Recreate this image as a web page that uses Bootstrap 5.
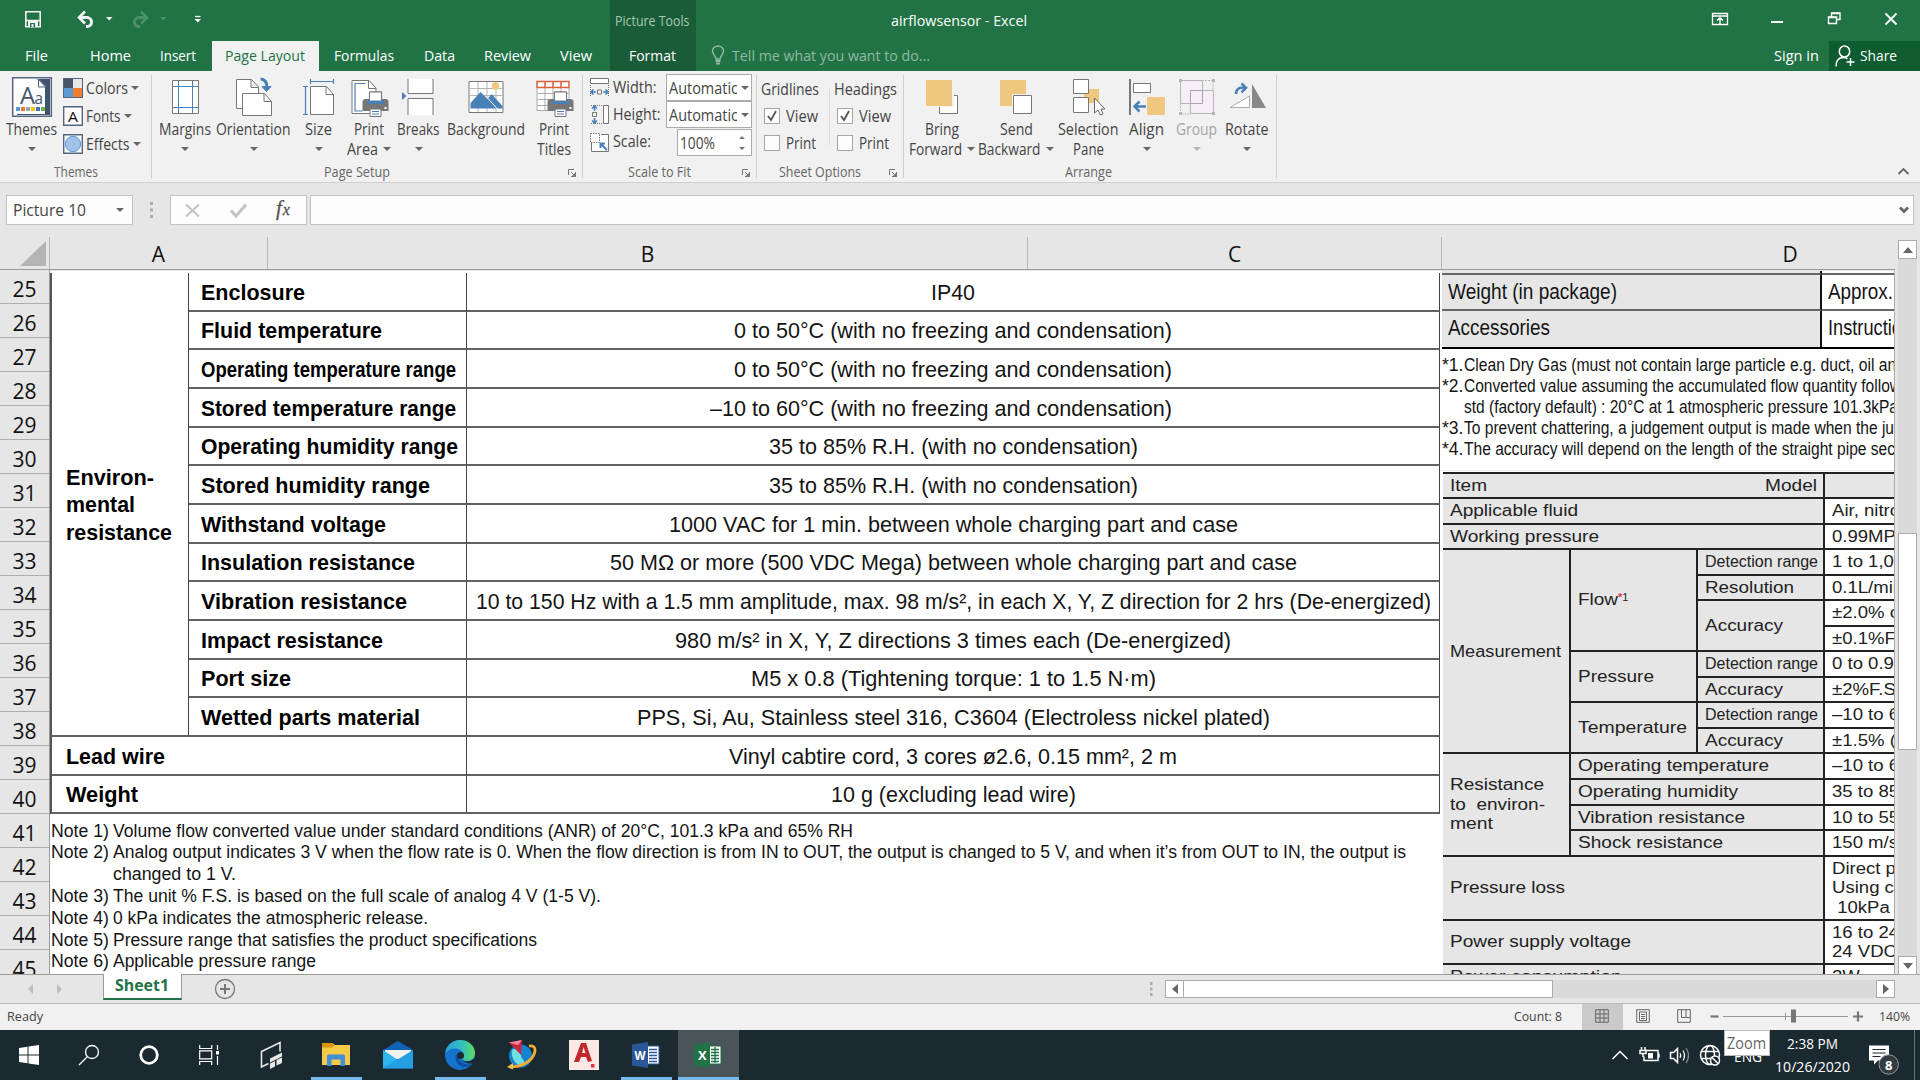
<!DOCTYPE html>
<html lang="en">
<head>
<meta charset="utf-8">
<title>airflowsensor - Excel</title>
<link href="https://cdn.jsdelivr.net/npm/bootstrap@5.3.0/dist/css/bootstrap.min.css" rel="stylesheet">
<style>
body{width:1920px;height:1080px;overflow:hidden;font-family:"Open Sans","Noto Sans",sans-serif;font-size:15.5px;line-height:20px;color:#444;background:#e6e6e6}
svg{display:block;flex:none}
[data-w],[data-s]{display:inline-block;white-space:pre;transform-origin:0 50%}
.xl-head{height:71px;background:#217346;color:#fff;position:relative}
.xl-titlebar{height:41px;display:grid;grid-template-columns:610px 86px 1000px 224px}
.xl-ctx{background:#1a5c38;color:#a6c7b4;font-size:14px;padding:11px 0 0 5px}
.xl-title{padding:10px 0 0 195px;font-size:15px}
.xl-tabs{height:30px;display:grid;grid-template-columns:73px 75px 60px 4px 107px 90px 60px 77px 60px 4px 86px 15px 21px 1034px 63px 91px}
.xl-tabs>div{display:flex;justify-content:center;padding-top:4px;font-size:15px}
.xl-tabs .on{background:#f1f1f1;color:#217346;padding-right:1px}
.xl-tabs .fmt{background:#1a5c38;padding-right:2px}
.xl-tabs .tell{justify-content:flex-start;color:#90b9a2}
.xl-tabs .signin{padding-right:3px}
.xl-tabs .share{background:#0e5c2f;justify-content:flex-start;padding-left:6px}
.xl-ribbon{height:112px;background:#f1f1f1;border-bottom:1px solid #d2d0ce;display:grid;grid-template-columns:152px 431px 174px 147px 373px 1fr}
.rgroup{position:relative;display:flex;flex-direction:column}
.rgroup::after{content:"";position:absolute;right:0;top:4px;height:103px;width:1px;background:#cfcfcf}
.rgroup:last-child::after{display:none}
.rbody{height:92px;display:grid}
.rname{font-size:14px;color:#666;line-height:18px;height:18px;text-align:center}
.rbtn{display:flex;flex-direction:column;align-items:center;padding-top:5px}
.rbtn>svg:first-child{height:43px}
.rbtn .ln{height:20px;display:flex;align-items:center;gap:5px}
.caret{width:0;height:0;border:4px solid transparent;border-top-color:#666;border-bottom:0;flex:none}
.caret.alone{margin-top:8px}
.dim{color:#a5a5a5}.dim .caret{border-top-color:#b5b5b5}
.launch{position:absolute;right:7px;bottom:5px}
.smalls{padding-top:7px}
.smalls>div{height:28px;display:flex;align-items:flex-start;gap:3px}
.combo{background:#fff;border:1px solid #ababab;height:27px;width:86px;display:flex;align-items:center;padding-left:2px;overflow:hidden;position:relative;margin-left:auto}
.combo .clipw{width:68px;overflow:hidden;height:20px}
.fitgrid{grid-template-rows:27px 28px 27px;padding:3px 5px 0 7px}
.chk{width:16px;height:16px;border:1px solid #a5a5a5;background:#fdfdfd}
.optcol+.optcol{position:relative}
.optcol+.optcol::before{content:"";position:absolute;left:-5px;top:18px;height:56px;width:1px;background:#dcdcdc}
.optcol .chkline{display:flex;align-items:center;gap:6px;padding-left:3px;height:27px;margin-top:-1px;margin-bottom:1px}
.fbar{height:54px;padding:12px 6px 0;display:flex}
.fbox{height:30px;background:#fdfdfd;border:1px solid #c2c2c2;display:flex;align-items:center}
.colhead{height:33px;width:1895px;border-bottom:1px solid #9b9b9b;display:grid;grid-template-columns:50px 218px 760px 414px 453px;color:#111;font-size:21px;line-height:28px;text-align:center}
.colhead>div{border-right:1px solid #b5b5b5;padding-top:3px}
.colhead>div:last-child{padding-left:244px;border-color:transparent}
.gridrow{height:703px;display:flex;margin-top:1px}
.rowheads{width:50px;overflow:hidden;border-right:1px solid #9b9b9b;color:#111;font-size:21px;flex:none;margin-top:-1px}
.rowheads div{height:34px;line-height:32px;text-align:center;border-bottom:1px solid #adadad;padding-top:3px}
.cells{width:1845px;height:703px;background:#fff;overflow:hidden;display:flex;font-family:"Liberation Sans",Arial,sans-serif;color:#141414;border-right:1px solid #aaa}
.pic1{width:1391px;flex:none;font-size:22px;padding-top:2px}
.spec{display:grid;grid-template-columns:137px 278px 972.5px;grid-template-rows:repeat(14,38.67px);border-left:2px solid #555;width:1389.5px}
.spec>div{border-right:1.5px solid #444;border-bottom:2px solid #626262;display:flex;align-items:center;padding-top:3px}
.spec .k{font-weight:700;padding-left:12px;color:#000;white-space:nowrap}
.spec .v{justify-content:center;padding-top:3px;padding-left:1px}
.spec .env{grid-row:span 12;flex-direction:column;align-items:flex-start;justify-content:center;line-height:27.4px;padding:2px 0 0 14px}
.spec .wide{grid-column:span 2;padding-left:14px}
.notes{font-size:17.5px;line-height:21.8px;padding-top:6.5px;height:158px;overflow:hidden}
.notes>div{display:grid;grid-template-columns:62.5px 1fr;height:21.8px;margin-left:.5px}
.pic2{width:454px;flex:none;overflow:hidden}
.pk{display:grid;grid-template-columns:380px 140px;grid-template-rows:4px 36px 36px;font-size:22px;border-bottom:2px solid #000;margin-left:1px}
.pk>div{border-bottom:2px solid #666;border-right:2px solid #111;padding-left:6px;background:#e6e6e6;display:flex;align-items:center}
.pk>div:nth-child(2n){background:#fff}
.pk>div:nth-last-child(-n+2){border-bottom:0;padding-bottom:3px}
.pn{font-size:17.5px;line-height:21.1px;padding:6px 0 0 1px;height:121px}
.pn>div{display:grid;grid-template-columns:22px 1fr;height:21.1px}
.ptab{margin:1px 0 0 2px;border-top:2px solid #222;display:grid;grid-template-columns:128px 127px 127px 140px;grid-template-rows:25px repeat(14,25.56px) 64.6px 43.7px 26px;font-size:16px;line-height:19.5px;color:#222}
.ptab>div{background:#e6e6e6;border-right:2px solid #222;border-bottom:2px solid #222;padding-left:7px;display:flex;align-items:center;white-space:nowrap}
.ptab>.d{background:#fff;border-right:0;grid-column:4;flex-wrap:wrap;align-content:center}
.ptab>.d.hd{background:#e6e6e6}
.ptab>.d>span{display:block}
.supn{font-size:11px;margin-top:-5px}
.c3{grid-column:span 3}.c2{grid-column:span 2}.r2{grid-row:span 2}.r4{grid-row:span 4}.r8{grid-row:span 8}
.vscroll{width:19px;margin:-31px 0 0 3px;height:735px;background:#dadada;flex:none;display:flex;flex-direction:column}
.sbtn{background:#fff;border:1px solid #ababab;width:19px;height:19px;display:grid;place-items:center;flex:none}
.vthumb{background:#fff;border:1px solid #ababab;height:217px;margin:274px 0 auto}
.sheets{height:30px;border-bottom:1px solid #bdbdbd;border-top:1px solid #9b9b9b;display:flex}
.shtab{width:79px;height:26px;margin:-1px 0 0 40px;background:#fff;border:1px solid #9b9b9b;border-top:0;border-bottom:2px solid #217346;color:#217346;font-weight:700;display:flex;justify-content:center;padding:1px 1px 0 0}
.hscroll{width:730px;height:18px;margin:5px 25px 0 11px;background:#dadada;display:flex}
.hscroll .sbtn{height:18px}
.hthumb{width:369px;background:#fff;border:1px solid #ababab;border-left:0;margin-right:auto}
.xl-status{height:26px;background:#f1f1f1;display:flex;font-size:13.5px;line-height:25px}
.viewb{width:41px;display:grid;place-items:center;padding:0 2px 2px 0}
.taskbar{height:50px;background:#1b2a30;display:grid;grid-template-columns:60px 60px 60px 60px 66px 62px 62px 62px 62px 62px 62px 61px 866px 157px 58px 100px;color:#fff;position:relative}
.taskbar>.ti{display:grid;place-items:center;position:relative;padding-right:2px}
.run::after{content:"";position:absolute;left:5px;right:6px;bottom:0;height:3px;background:#76b9ed}
.run.act{background:#4a555a}.run.act::after{left:0;right:0}
.clock{font-size:15px;text-align:center;line-height:23px;padding-top:2px;margin-left:5px;width:90px}
.tip{position:absolute;left:1724px;top:1030px;width:46px;height:26px;background:#fff;border:1px solid #bbb;color:#666;font-size:17px;line-height:24px;padding-left:2px;z-index:3}
</style>
<script src="https://cdn.jsdelivr.net/npm/bootstrap@5.3.0/dist/js/bootstrap.bundle.min.js"></script>
</head>
<body>
<svg width="0" height="0" class="position-absolute"><defs>
<g id="printer"><path d="M7 12V0h12v12" fill="#fff" stroke="#777" stroke-width="1.2"/><path d="M0 10q0-3 3-3h20q3 0 3 3v9H0z" fill="#777"/><path d="M5 7h16v5H5z" fill="#4a80b8"/><path d="M7 9V0h12v9z" fill="#fff" stroke="#777"/><path d="M5 9h16v3H5z" fill="#4a80b8"/><path d="M7.500 17h11v7.500h-11z" fill="#fff" stroke="#777"/><path d="M9.500 19.500h7M9.500 22h7" stroke="#4a80b8"/><path d="M22 15h2v2h-2z" fill="#fff"/></g>
<g id="lnch" fill="none" stroke="#777"><path d="M.5 6V.5H6M3 3l3.500 3.500M7.500 3v4.500H3"/><path d="M7.500 4v3.500H4z" fill="#777"/></g>
</defs></svg>

<header class="xl-head">
 <div class="xl-titlebar">
  <svg width="610" height="41" fill="none">
   <path d="M25.800 11.800h14.400v15H25.800z" stroke="#f3f3f3" stroke-width="1.600"/><path d="M26 20.500h14" stroke="#f3f3f3" stroke-width="1.500"/><path d="M28 21h10v6H28z" fill="#f3f3f3"/><path d="M30 23h5v4h-5z" fill="#217346"/><path d="M31.500 24h2v3h-2z" fill="#f3f3f3"/>
   <path d="M79 17.500h9a5.500 4.800 0 0 1 0 9h-2" stroke="#f3f3f3" stroke-width="2.800"/><path d="M85 11.500l-6 6 6 6" stroke="#f3f3f3" stroke-width="2.600"/><path d="M106 17h6.500l-3.200 3.500z" fill="#f3f3f3"/>
   <g stroke="#4d8f6b"><path d="M147 17.500h-9a5.500 4.800 0 0 0 0 9h2" stroke-width="2.800"/><path d="M141 11.500l6 6-6 6" stroke-width="2.600"/></g><path d="M160 17h6.500l-3.200 3.500z" fill="#4d8f6b"/>
   <path d="M195 16.500h5.500" stroke="#fff" stroke-width="1.300"/><path d="M194.500 19h6.500l-3.200 3.500z" fill="#fff"/>
  </svg>
  <div class="xl-ctx"><span data-w="74.500">Picture Tools</span></div>
  <div class="xl-title"><span data-w="136">airflowsensor - Excel</span></div>
  <svg width="224" height="41" viewBox="1696 0 224 41" fill="none" stroke="#fff"><path d="M1712.500 13.500h15v11h-15zM1712.500 16h15M1720 24v-6M1717 20.500l3-2.800 3 2.800" stroke-width="1.300"/><path d="M1771 22h12" stroke-width="2"/><path d="M1828.500 17h8v6.500h-8z M1831.500 17v-4h8.500v6.500h-3.500" stroke-width="1.400"/><path d="M1828 17.500h9M1831 13.500h9" stroke-width="1.500"/><path d="M1885.500 13.500l11 11M1896.500 13.500l-11 11" stroke-width="1.800"/></svg>
 </div>
 <div class="xl-tabs">
  <div><span data-w="23">File</span></div><div><span data-w="41">Home</span></div><div><span data-w="36">Insert</span></div><div></div>
  <div class="on"><span data-w="80">Page Layout</span></div><div><span data-w="60">Formulas</span></div><div><span data-w="31">Data</span></div><div><span data-w="47">Review</span></div><div><span data-w="32">View</span></div><div></div>
  <div class="fmt"><span data-w="47">Format</span></div><div></div>
  <div class="justify-content-start"><svg width="16" height="22" viewBox="0 0 16 22" fill="none" stroke="#90b9a2" stroke-width="1.500"><path d="M5 14c0-3-3.500-4-3.500-8a5.500 5 0 0 1 11 0c0 4-3.500 5-3.500 8z"/><path d="M4.500 16h5M5 18.500h4" stroke-width="2"/></svg></div>
  <div class="tell"><span data-w="198">Tell me what you want to do...</span></div>
  <div class="signin"><span data-w="45">Sign in</span></div>
  <div class="share gap-1"><svg width="21" height="22" viewBox="0 0 21 22" fill="none" stroke="#fff" stroke-width="1.500"><ellipse cx="9.500" cy="6.500" rx="5.200" ry="5.500"/><path d="M1 21.500c0-6 3-9 7.500-9 2 0 3 .5 4 1.500M15.500 13v8M11.500 17h8"/></svg><span data-w="37">Share</span></div>
 </div>
</header>

<section class="xl-ribbon">
 <div class="rgroup"><div class="rbody" style="grid-template-columns:63px 89px">
  <div class="rbtn"><svg width="42" viewBox="11 76 42 43"><path d="M12.700 77.700h38.600v38.600H12.700z" fill="#fff" stroke="#56657f" stroke-width="1.500"/><path d="M36 79h14v36H17l0-1h28V86z" fill="#3f5270"/><path d="M39 79l7 8h-7z" fill="#fff" stroke="#56657f"/><path d="M15 79.500h24v7.500h6v27H15z" fill="#fff"/><path d="M38.500 79.500v7.500h7z" fill="#fff" stroke="#56657f"/><g fill="#44546a"><text x="20" y="103.500" font-size="23" textLength="15" lengthAdjust="spacingAndGlyphs">A</text><text x="34.500" y="103.500" font-size="16" textLength="8.500" lengthAdjust="spacingAndGlyphs">a</text></g><path d="M16 107h4v4h-4z" fill="#5b9bd5"/><path d="M21 107h4v4h-4z" fill="#ed7d31"/><path d="M26 107h4v4h-4z" fill="#a5a5a5"/><path d="M31 107h4v4h-4z" fill="#ffc000"/><path d="M36 107h4v4h-4z" fill="#4472c4"/><path d="M41 107h4v4h-4z" fill="#70ad47"/></svg><div class="ln"><span data-w="51">Themes</span></div><i class="caret alone"></i></div>
  <div class="smalls">
   <div><svg width="20" height="20"><path d="M0 0h20v20H0z" fill="#56657f"/><path d="M1 1h9v9H1z" fill="#44546a"/><path d="M10 1h9v9h-9z" fill="#e7e6e6"/><path d="M1 10h9v9H1z" fill="#5b9bd5"/><path d="M10 10h9v9h-9z" fill="#ed7d31"/></svg><span data-w="42">Colors</span><i class="caret mt-2"></i></div>
   <div><svg width="20" height="20"><path d="M.7.700h18.600v18.600H.7z" fill="#fff" stroke="#56657f" stroke-width="1.400"/><text x="5" y="15.500" font-size="15" fill="#111" textLength="10" lengthAdjust="spacingAndGlyphs">A</text></svg><span data-w="34.500">Fonts</span><i class="caret mt-2"></i></div>
   <div><svg width="20" height="20"><path d="M.7.700h18.600v18.600H.7z" fill="#fff" stroke="#56657f" stroke-width="1.400"/><circle cx="10" cy="10" r="7.700" fill="#a3c2e8" stroke="#5b9bd5"/></svg><span data-w="43.500">Effects</span><i class="caret mt-2"></i></div>
  </div></div>
  <div class="rname"><span data-w="44">Themes</span></div></div>

 <div class="rgroup"><div class="rbody" style="grid-template-columns:65px 73px 57px 44px 55px 79px 57px">
  <div class="rbtn"><svg width="28" viewBox="171 76 28 43"><path d="M172.500 80.500h26v33h-26z" fill="#fff" stroke="#777"/><path d="M178.500 81v32M192.500 81v32M173 86.500h25M173 107.500h25" stroke="#4a80b8"/></svg><div class="ln"><span data-w="52">Margins</span></div><i class="caret alone"></i></div>
  <div class="rbtn"><svg width="40" viewBox="234 76 40 43" fill="#fff" stroke="#777"><path d="M236.500 108.500v-29h15l7 7.500v22zM251 79.500v8h7"/><path d="M242.500 115.500v-22h22l7 8v14z"/><path d="M264 93.500v8h7.500" fill="none"/><path d="M260.500 79c5 0 6.500 4 6.500 9" fill="none" stroke="#4a80b8" stroke-width="3"/><path d="M262 86.500h9l-4.500 5z" fill="#4a80b8" stroke="#4a80b8"/></svg><div class="ln"><span data-w="74.500">Orientation</span></div><i class="caret alone"></i></div>
  <div class="rbtn"><svg width="34" viewBox="302 76 34 43" fill="none"><path d="M310.500 114.500v-28h16l7 8v20z" fill="#fff" stroke="#777"/><path d="M326 86.500v8h7.500" stroke="#777"/><path d="M310.500 81.500h23M310.500 79v5M333.500 79v5M305.500 86.500v28M303 86.500h5M303 114.500h5" stroke="#4a80b8" stroke-width="1.200"/></svg><div class="ln"><span data-w="27">Size</span></div><i class="caret alone"></i></div>
  <div class="rbtn"><svg width="40" viewBox="349.500 76 40 43"><path d="M352.500 113.500v-33h17l7 7.500v25.500z" fill="#fff" stroke="#777"/><path d="M369 80.500v8h7.500" fill="none" stroke="#777"/><path d="M363 111h-7.500V83.500H366" fill="none" stroke="#4a80b8" stroke-width="1.200"/><use href="#printer" x="363" y="92"/></svg><div class="ln"><span data-w="30">Print</span></div><div class="ln"><span data-w="31">Area</span><i class="caret"></i></div></div>
  <div class="rbtn"><svg width="36" viewBox="400.500 76 36 43"><path d="M407.500 79v14.500h25V79M407.500 115V98.500h25V115" fill="#fff" stroke="#777"/><path d="M401.500 92l4.500 4-4.500 4z" fill="#4a80b8"/></svg><div class="ln"><span data-w="42.500">Breaks</span></div><i class="caret alone"></i></div>
  <div class="rbtn"><svg width="36" viewBox="467.500 76 36 43"><path d="M468.500 81.500h34v31h-34z" fill="#fff" stroke="#777"/><path d="M469 88.500h33M469 95.500h33M477.500 82v30M486.500 82v30M495.500 82v30" stroke="#b5b5b5"/><circle cx="495" cy="86" r="3.800" fill="#f0c77c"/><path d="M470 108.500V103l10-11 7 7 4-5 11 12v2.500z" fill="#4a80b8"/><path d="M487 98l10 11" stroke="#fff"/></svg><div class="ln"><span data-w="78">Background</span></div></div>
  <div class="rbtn"><svg width="40" viewBox="533.500 76 40 43"><path d="M536.500 81.500h32v29h-32z" fill="#fff" stroke="#aaa"/><path d="M537 93.500h31M537 99.500h31M537 105.500h31M544.500 82v29M552.500 82v29M560.500 82v29" stroke="#aaa"/><path d="M536.500 81.500h32v6h-32zM544.500 82v5M552.500 82v5M560.500 82v5" fill="none" stroke="#e0623a" stroke-width="1.300"/><use href="#printer" x="547" y="92"/></svg><div class="ln"><span data-w="30">Print</span></div><div class="ln"><span data-w="34">Titles</span></div></div>
  </div>
  <div class="rname" style="padding-right:22px"><span data-w="66">Page Setup</span></div><svg class="launch" width="8" height="8"><use href="#lnch"/></svg></div>

 <div class="rgroup"><div class="rbody fitgrid">
  <div class="d-flex gap-1 align-items-start"><svg class="mt-1" width="19" height="19" fill="none"><path d="M.5.500h18v5H.5z" fill="#fff" stroke="#777"/><path d="M.5 7v11M18.500 7v11" stroke="#777" stroke-dasharray="1 1"/><path d="M7.500 12h4v4h-4z" stroke="#777"/><path d="M1 14h5M13 14h5M3.500 11.500L1 14l2.500 2.500M15.500 11.500L18 14l-2.500 2.500" stroke="#4a80b8" stroke-width="1.600"/></svg><span style="margin-top:3px" data-w="43.500">Width:</span><div class="combo"><div class="clipw"><span data-w="69">Automatic</span></div><i class="caret ms-1"></i></div></div>
  <div class="d-flex gap-1 align-items-start"><svg class="mt-1" width="19" height="19" fill="none"><path d="M13.500.500h5v18h-5z" fill="#fff" stroke="#777"/><path d="M1 .5h11M1 18.500h11" stroke="#777" stroke-dasharray="1 1"/><path d="M2.500 7.500h4v4h-4z" stroke="#777"/><path d="M4.500 1v5M4.500 13v5M2 3.500L4.500 1 7 3.500M2 15.500L4.500 18 7 15.500" stroke="#4a80b8" stroke-width="1.600"/></svg><span style="margin-top:3px" data-w="47.500">Height:</span><div class="combo"><div class="clipw"><span data-w="69">Automatic</span></div><i class="caret ms-1"></i></div></div>
  <div class="d-flex gap-1 align-items-start"><svg class="mt-1" width="19" height="19" fill="none"><path d="M1.500 10v8.500h17V1.500H11" fill="#fff" stroke="#777"/><path d="M.5.500h9v9h-9z" fill="#fff" stroke="#777" stroke-dasharray="1.500 1"/><path d="M10 10l7 7M10.500 15v-4.500H15" stroke="#4a80b8" stroke-width="2"/></svg><span style="margin-top:2px" data-w="38">Scale:</span><div class="combo" style="width:75px"><span data-w="35">100%</span><svg class="ms-auto me-1" width="10" height="20"><path d="M2 6h6L5 3zM2 14h6l-3 3z" fill="#777"/></svg></div></div>
  </div>
  <div class="rname" style="padding-right:21px"><span data-w="63">Scale to Fit</span></div><svg class="launch" width="8" height="8"><use href="#lnch"/></svg></div>

 <div class="rgroup"><div class="rbody" style="grid-template-columns:73px 72px;padding-left:4px">
  <div class="optcol"><div class="mt-2 pb-1"><span data-w="58">Gridlines</span></div>
   <div class="chkline"><svg class="chk" viewBox="0 0 14 14"><path d="M3 7l3 4 5-9" fill="none" stroke="#555" stroke-width="1.800"/></svg><span data-w="32">View</span></div>
   <div class="chkline"><span class="chk"></span><span data-w="30">Print</span></div></div>
  <div class="optcol"><div class="mt-2 pb-1"><span data-w="63">Headings</span></div>
   <div class="chkline"><svg class="chk" viewBox="0 0 14 14"><path d="M3 7l3 4 5-9" fill="none" stroke="#555" stroke-width="1.800"/></svg><span data-w="32">View</span></div>
   <div class="chkline"><span class="chk"></span><span data-w="30">Print</span></div></div>
  </div>
  <div class="rname" style="padding-right:21px"><span data-w="82">Sheet Options</span></div><svg class="launch" width="8" height="8"><use href="#lnch"/></svg></div>

 <div class="rgroup"><div class="rbody" style="grid-template-columns:76px 72px 73px 43px 57px 44px">
  <div class="rbtn"><svg width="36" viewBox="924 76 36 43"><path d="M939.500 95.500h18v18h-18z" fill="#fff" stroke="#777"/><path d="M925 79h29v28h-29z" fill="#f1f1f1"/><path d="M926 80h26v26h-26z" fill="#efc77f"/></svg><div class="ln"><span data-w="34">Bring</span></div><div class="ln"><span data-w="53">Forward</span><i class="caret"></i></div></div>
  <div class="rbtn"><svg width="36" viewBox="998 76 36 43"><path d="M1000 80h26v26h-26z" fill="#efc77f"/><path d="M1012 94h21v21h-21z" fill="#f1f1f1"/><path d="M1013.500 95.500h18v18h-18z" fill="#fff" stroke="#777"/></svg><div class="ln"><span data-w="33">Send</span></div><div class="ln"><span data-w="62.500">Backward</span><i class="caret"></i></div></div>
  <div class="rbtn"><svg width="36" viewBox="1071 76 36 43"><path d="M1084 89h15v14h-15z" fill="#efc77f"/><path d="M1073.500 79.500h15v14h-15zM1073.500 97.500h15v15h-15z" fill="#fff" stroke="#777"/><path d="M1094.500 98v15l3.500-3 2.500 5 2.500-1-2-5h4z" fill="#fff" stroke="#666"/></svg><div class="ln"><span data-w="60.500">Selection</span></div><div class="ln"><span data-w="31">Pane</span></div></div>
  <div class="rbtn"><svg width="38" viewBox="1128 76 38 43"><path d="M1130 79v36" stroke="#777" stroke-width="2"/><path d="M1133.500 83.500h17v9h-17z" fill="#fff" stroke="#777"/><path d="M1147 97h18v18h-18z" fill="#efc77f"/><path d="M1146 106.500h-11M1139.500 101.500l-5 5 5 5" fill="none" stroke="#4a80b8" stroke-width="2.500"/></svg><div class="ln"><span data-w="35">Align</span></div><i class="caret alone"></i></div>
  <div class="rbtn dim"><svg width="38" viewBox="1178 76 38 43" stroke="#b9b3ba" fill="#f5eef6"><path d="M1180.500 80.500h22v23h-22z"/><path d="M1190.500 90.500h23v23h-23z" /><path d="M1190.500 90.500h12v13h-12z" stroke="#a9a3aa"/><path d="M1180.500 103v11h10M1202 80.500h11v10" fill="none" stroke-dasharray="2 1"/><path d="M1179 79h3v3h-3zM1212 79h3v3h-3zM1179 112h3v3h-3zM1212 112h3v3h-3z" fill="#b5b5b5" stroke="none"/></svg><div class="ln"><span data-w="41">Group</span></div><i class="caret alone"></i></div>
  <div class="rbtn"><svg width="38" viewBox="1228 76 38 43"><path d="M1252 84v24h14z" fill="#888"/><path d="M1249.500 96v11.500H1230z" fill="#fff" stroke="#aaa"/><path d="M1236 94c0-5 3-7 9-6.500M1241.500 83.500l4.500 4.300-4.500 4.500" fill="none" stroke="#4a80b8" stroke-width="2.500"/></svg><div class="ln"><span data-w="43.500">Rotate</span></div><i class="caret alone"></i></div>
  </div>
  <div class="rname pe-1"><span data-w="47">Arrange</span></div></div>
 <div class="rgroup"><svg class="launch" style="right:10px" width="13" height="12" fill="none"><path d="M1.500 9l5-5 5 5" stroke="#666" stroke-width="1.800"/></svg></div>
</section>

<section class="fbar">
 <div class="fbox justify-content-between" style="width:127px;padding:0 8px 0 6px"><span data-w="73">Picture 10</span><i class="caret"></i></div>
 <svg width="37" height="30"><path d="M17 7h3v3h-3zM17 13.500h3v3h-3zM17 20h3v3h-3z" fill="#adadad"/></svg>
 <div class="fbox" style="width:137px"><svg width="135" height="28" fill="none"><path d="M15 8.500l13 12M28 8.500l-13 12" stroke="#c3c3c3" stroke-width="2"/><path d="M60 14.500l5 5.500 10-11.500" stroke="#c3c3c3" stroke-width="3"/><text x="105" y="19" fill="#555" stroke="#555" stroke-width=".3" font-family="Liberation Serif" font-style="italic" font-size="21">f<tspan font-size="16" dx="1">x</tspan></text></svg></div>
 <div class="fbox justify-content-end" style="width:1604px;margin-left:3px;padding-right:3px"><svg width="12" height="10" fill="none"><path d="M2 2.500l4 4 4-4" stroke="#666" stroke-width="2.800"/></svg></div>
</section>

<section class="colhead"><div class="p-0"><svg width="49" height="32"><path d="M46 4v25H20z" fill="#b4b4b4"/></svg></div><div>A</div><div>B</div><div>C</div><div>D</div></section>

<main class="gridrow">
 <div class="rowheads"><div>25</div><div>26</div><div>27</div><div>28</div><div>29</div><div>30</div><div>31</div><div>32</div><div>33</div><div>34</div><div>35</div><div>36</div><div>37</div><div>38</div><div>39</div><div>40</div><div>41</div><div>42</div><div>43</div><div>44</div><div>45</div></div>
 <div class="cells">
  <div class="pic1">
   <div class="spec">
    <div class="k env"><span data-w="88">Environ-</span><span data-w="69">mental</span><span data-w="106">resistance</span></div>
    <div class="k"><span data-w="104">Enclosure</span></div><div class="v"><span data-w="44">IP40</span></div>
    <div class="k"><span data-w="181">Fluid temperature</span></div><div class="v"><span data-w="438">0 to 50°C (with no freezing and condensation)</span></div>
    <div class="k"><span data-w="255">Operating temperature range</span></div><div class="v"><span data-w="438">0 to 50°C (with no freezing and condensation)</span></div>
    <div class="k"><span data-w="255">Stored temperature range</span></div><div class="v pe-4"><span data-w="462">–10 to 60°C (with no freezing and condensation)</span></div>
    <div class="k"><span data-w="257">Operating humidity range</span></div><div class="v"><span data-w="369">35 to 85% R.H. (with no condensation)</span></div>
    <div class="k"><span data-w="229">Stored humidity range</span></div><div class="v"><span data-w="369">35 to 85% R.H. (with no condensation)</span></div>
    <div class="k"><span data-w="185">Withstand voltage</span></div><div class="v"><span data-w="569">1000 VAC for 1 min. between whole charging part and case</span></div>
    <div class="k"><span data-w="214">Insulation resistance</span></div><div class="v"><span data-w="687">50 MΩ or more (500 VDC Mega) between whole charging part and case</span></div>
    <div class="k"><span data-w="206">Vibration resistance</span></div><div class="v"><span data-w="955">10 to 150 Hz with a 1.5 mm amplitude, max. 98 m/s², in each X, Y, Z direction for 2 hrs (De-energized)</span></div>
    <div class="k"><span data-w="182">Impact resistance</span></div><div class="v"><span data-w="556">980 m/s² in X, Y, Z directions 3 times each (De-energized)</span></div>
    <div class="k"><span data-w="90">Port size</span></div><div class="v"><span data-w="405">M5 x 0.8 (Tightening torque: 1 to 1.5 N·m)</span></div>
    <div class="k"><span data-w="219">Wetted parts material</span></div><div class="v"><span data-w="633">PPS, Si, Au, Stainless steel 316, C3604 (Electroless nickel plated)</span></div>
    <div class="k wide"><span data-w="99">Lead wire</span></div><div class="v"><span data-w="448">Vinyl cabtire cord, 3 cores ø2.6, 0.15 mm², 2 m</span></div>
    <div class="k wide"><span data-w="72">Weight</span></div><div class="v"><span data-w="245">10 g (excluding lead wire)</span></div>
   </div>
   <div class="notes">
    <div><span><span data-w="58">Note 1)</span></span><span><span data-w="740">Volume flow converted value under standard conditions (ANR) of 20°C, 101.3 kPa and 65% RH</span></span></div>
    <div><span><span data-w="58">Note 2)</span></span><span><span data-w="1293">Analog output indicates 3 V when the flow rate is 0. When the flow direction is from IN to OUT, the output is changed to 5 V, and when it’s from OUT to IN, the output is</span></span></div>
    <div><span></span><span><span data-w="123">changed to 1 V.</span></span></div>
    <div><span><span data-w="58">Note 3)</span></span><span><span data-w="488">The unit % F.S. is based on the full scale of analog 4 V (1-5 V).</span></span></div>
    <div><span><span data-w="58">Note 4)</span></span><span><span data-w="315">0 kPa indicates the atmospheric release.</span></span></div>
    <div><span><span data-w="58">Note 5)</span></span><span><span data-w="424">Pressure range that satisfies the product specifications</span></span></div>
    <div><span><span data-w="58">Note 6)</span></span><span><span data-w="203">Applicable pressure range</span></span></div>
   </div>
  </div>
  <div class="pic2">
   <div class="pk"><div></div><div></div>
    <div><span data-w="169">Weight (in package)</span></div><div><span data-w="65">Approx.</span></div>
    <div><span data-w="102">Accessories</span></div><div><span data-w="84">Instruction</span></div></div>
   <div class="pn">
    <div><span>*1.</span><span><span data-w="441">Clean Dry Gas (must not contain large particle e.g. duct, oil and</span></span></div>
    <div><span>*2.</span><span><span data-w="437">Converted value assuming the accumulated flow quantity follow</span></span></div>
    <div><span></span><span><span data-w="434">std (factory default) : 20°C at 1 atmospheric pressure 101.3kPa</span></span></div>
    <div><span>*3.</span><span><span data-w="430">To prevent chattering, a judgement output is made when the ju</span></span></div>
    <div><span>*4.</span><span><span data-w="431">The accuracy will depend on the length of the straight pipe sec</span></span></div>
   </div>
   <div class="border-top border-secondary-subtle"></div>
   <div class="ptab">
    <div class="c3 justify-content-between" style="padding-right:6px"><span data-w="37">Item</span><span data-w="52">Model</span></div><div class="d hd"></div>
    <div class="c3"><span data-w="128">Applicable fluid</span></div><div class="d"><span data-s="1.160">Air, nitrogen</span></div>
    <div class="c3"><span data-w="149">Working pressure</span></div><div class="d"><span data-s="1.160">0.99MPa</span></div>
    <div class="r8"><span data-w="111">Measurement</span></div><div class="r4"><span data-w="40">Flow</span><span class="supn"><span class="text-danger fw-bold">*</span>1</span></div><div><span data-w="113">Detection range</span></div><div class="d"><span data-s="1.160">1 to 1,000</span></div>
    <div><span data-w="89">Resolution</span></div><div class="d"><span data-s="1.160">0.1L/min</span></div>
    <div class="r2"><span data-w="78">Accuracy</span></div><div class="d"><span data-s="1.160">±2.0% of</span></div><div class="d"><span data-s="1.160">±0.1%F.S.</span></div>
    <div class="r2"><span data-w="76">Pressure</span></div><div><span data-w="113">Detection range</span></div><div class="d"><span data-s="1.160">0 to 0.99</span></div>
    <div><span data-w="78">Accuracy</span></div><div class="d"><span data-s="1.160">±2%F.S.</span></div>
    <div class="r2"><span data-w="109">Temperature</span></div><div><span data-w="113">Detection range</span></div><div class="d"><span data-s="1.160">–10 to 60</span></div>
    <div><span data-w="78">Accuracy</span></div><div class="d"><span data-s="1.160">±1.5% (F.S.)</span></div>
    <div class="r4"><div><span data-w="94">Resistance</span><br><span data-w="95">to  environ-</span><br><span data-w="43">ment</span></div></div><div class="c2"><span data-w="191">Operating temperature</span></div><div class="d"><span data-s="1.160">–10 to 60</span></div>
    <div class="c2"><span data-w="160">Operating humidity</span></div><div class="d"><span data-s="1.160">35 to 85%</span></div>
    <div class="c2"><span data-w="167">Vibration resistance</span></div><div class="d"><span data-s="1.160">10 to 55</span></div>
    <div class="c2"><span data-w="145">Shock resistance</span></div><div class="d"><span data-s="1.160">150 m/s²</span></div>
    <div class="c3"><span data-w="115">Pressure loss</span></div><div class="d"><span data-s="1.160">Direct piping
Using chan
 10kPa</span></div>
    <div class="c3"><span data-w="181">Power supply voltage</span></div><div class="d"><span data-s="1.160">16 to 24
24 VDC</span></div>
    <div class="c3"><span data-w="172">Power consumption</span></div><div class="d"><span data-s="1.160">2W</span></div>
   </div>
  </div>
 </div>
 <div class="vscroll"><div class="sbtn"><svg width="10" height="6"><path d="M0 6h10L5 0z" fill="#666"/></svg></div><div class="vthumb"></div><div class="sbtn"><svg width="10" height="6"><path d="M0 0h10L5 6z" fill="#666"/></svg></div></div>
</main>

<section class="sheets">
 <svg width="63" height="28"><path d="M33 9v10l-5-5zM57 9v10l5-5z" fill="#bdbdbd"/></svg>
 <div class="shtab"><span data-w="54">Sheet1</span></div>
 <svg width="60" height="28" fill="none" stroke="#777"><circle cx="43" cy="14" r="9.500" stroke-width="1.300"/><path d="M43 9v10M38 14h10" stroke-width="2"/></svg>
 <svg class="ms-auto" width="5" height="28"><path d="M1 7h2.500v3H1zM1 12.500h2.500v3H1zM1 18h2.500v3H1z" fill="#adadad"/></svg>
 <div class="hscroll"><div class="sbtn"><svg width="6" height="10"><path d="M6 0v10L0 5z" fill="#666"/></svg></div><div class="hthumb"></div><div class="sbtn"><svg width="6" height="10"><path d="M0 0v10l6-5z" fill="#666"/></svg></div></div>
</section>

<section class="xl-status">
 <div style="padding-left:7px"><span data-w="36">Ready</span></div>
 <div class="ms-auto" style="margin-right:20px"><span data-w="48">Count: 8</span></div>
 <div class="viewb" style="background:#cacaca"><svg width="14" height="14" fill="none" stroke="#666"><path d="M.7.700h12.600v12.600H.7zM5 1v12M9 1v12M1 5h12M1 9h12"/></svg></div>
 <div class="viewb"><svg width="14" height="14" fill="none" stroke="#666"><path d="M.7.700h12.600v12.600H.7z"/><path d="M3.500 3h7v8.500h-7zM5 5.500h4M5 7.500h4M5 9.500h4"/></svg></div>
 <div class="viewb"><svg width="14" height="14" fill="none" stroke="#666"><path d="M.7.700h12.600v12.600H.7zM4.500 1v7.500h8.500M9 1v7.500"/></svg></div>
 <svg width="174" height="26" viewBox="1705 1004 174 26" stroke="#777"><path d="M1710.500 1016.500h8" stroke-width="2.200"/><path d="M1723 1016.500h125M1785.500 1013v7" stroke="#999"/><path d="M1791 1009.500h5v13h-5z" fill="#777" stroke="none"/><path d="M1853 1016.500h10M1858 1011.500v10" stroke-width="2.200"/></svg>
 <div style="width:41px"><span data-w="31">140%</span></div>
</section>

<footer class="taskbar">
 <div class="ti"><svg width="20" height="20" fill="#fff"><path d="M0 3l8.500-1.200v7.700H0zM9.500 1.600L20 0v9.500H9.500zM0 10.500h8.500v7.700L0 17zM9.500 10.500H20V20L9.500 18.400z"/></svg></div>
 <div class="ti"><svg width="22" height="22" fill="none" stroke="#fff" stroke-width="1.300"><circle cx="14" cy="8" r="6.500"/><path d="M9.500 12.500L1 21"/></svg></div>
 <div class="ti"><svg width="20" height="20" fill="none" stroke="#fff" stroke-width="2.800"><circle cx="10" cy="10" r="8.300"/></svg></div>
 <div class="ti"><svg width="20" height="20" fill="none" stroke="#fff" stroke-width="1.200"><path d="M.7 0v3.500h12V0M.7 20v-3.500h12V20M.7 5.800h12v8H.7zM18.500 0v5M18.500 11v9"/><path d="M17 6h3v3.500h-3z" fill="#fff" stroke="none"/></svg></div>
 <div class="ti"><svg width="24" height="28" viewBox="0 0 24 28" fill="none" stroke="#e8e8e8" stroke-width="1.600"><path d="M8.500 22.500L1.500 26V10.500L20 1.500v9"/><path d="M10 17.500l12-6v4l-12 6zM10 22.500l5-2.500v5.500L10 28zM16.500 19l5.500-2.500V22l-5.500 2.500z" fill="#e8e8e8" stroke="none"/></svg></div>
 <div class="ti run"><svg width="28" height="24" viewBox="0 0 28 24"><path d="M0 0h10l3 2h15v20H0z" fill="#f7c948"/><path d="M0 0h10l3 2-3 2.500H0z" fill="#d9950f"/><path d="M5 23V13q0-1.500 1.500-1.500h15Q23 11.500 23 13v10h-4.500v-6.500h-9V23z" fill="#3f8fd6"/></svg></div>
 <div class="ti"><svg width="30" height="28" viewBox="0 0 30 28"><path d="M0 9L15 0l15 9v18.500H0z" fill="#0f62b5"/><path d="M2 9h26v9H2z" fill="#f2f2f2"/><path d="M0 9l15 10L0 27.500z" fill="#2fb4ee"/><path d="M30 9L0 27.500h30z" fill="#249fe2"/></svg></div>
 <div class="ti run"><svg width="30" height="30" viewBox="0 0 30 30"><defs><linearGradient id="eg"><stop stop-color="#2b9fe0"/><stop offset=".6" stop-color="#35c1b9"/><stop offset="1" stop-color="#63dd57"/></linearGradient></defs><circle cx="15" cy="15" r="15" fill="#1673cc"/><path d="M0 14C1 5 8 0 15 0c9 0 15 6 15 13 0 5-4 8-8 8-3 0-5-1-5-2.500 1-1 1.500-2 1.500-3.500C18 10 13 8 9 8.500 4 9 1 12 0 14z" fill="url(#eg)"/><path d="M11 13c-2 7 2 14 9 14 3 0 6-1 8-4-3 2-7 2-10 0-4-2-5.500-6-7-10z" fill="#0c4fa0"/><path d="M17 18.500c0 2 2 3 5 3 3 0 5-1 8-3.500v5c-5 1.500-13 0-13-4.500z" fill="#1b2a30"/><circle cx="15.500" cy="15.500" r="3.500" fill="#1b2a30"/></svg></div>
 <div class="ti"><svg width="30" height="30" viewBox="0 0 30 30"><circle cx="13.500" cy="16" r="11.500" fill="#1583d0"/><path d="M5 10c5-3 9 0 9 5s4 4 3 8-5 3-8 0-5-8-4-13z" fill="#6fe0e6"/><path d="M22 6c5-1 7 2 5.500 7C25.500 20 17 26.500 3 27" fill="none" stroke="#f0ad34" stroke-width="2.800"/><path d="M6 23l-6 4 6 2.500z" fill="#f5c04e"/><path d="M2 2.500L15 0 14 15z" fill="#cf2440"/><path d="M2 2.500L15 0l-4 5z" fill="#f08a98"/></svg></div>
 <div class="ti"><svg width="30" height="30" viewBox="0 0 30 30"><path d="M0 0h30v30H0z" fill="#fbe9e5"/><path d="M5 22L12 3h5l6 18-4 1-2-5h-5l-2 5zM13 13h3.500L14.500 7z" fill="#c1272d" fill-rule="evenodd"/><path d="M22 24h3.500v3.500H22z" fill="#e2343a"/></svg></div>
 <div class="ti run"><svg width="28" height="28" viewBox="0 0 28 28"><path d="M14 5h13v18H14z" fill="#fff" stroke="#2b579a"/><path d="M17 8.500h8M17 11.500h8M17 14.500h8M17 17.500h8M17 20.500h8" stroke="#2b579a" stroke-width="1.300"/><path d="M0 3.500L16 1v26L0 24.500z" fill="#2b579a"/><text x="2.500" y="18.500" font-size="13" font-weight="bold" fill="#fff" textLength="11" lengthAdjust="spacingAndGlyphs">W</text></svg></div>
 <div class="ti run act"><svg width="28" height="28" viewBox="0 0 28 28"><path d="M14 5h13v18H14z" fill="#fff" stroke="#217346"/><path d="M17 8.500h8M17 11.500h8M17 14.500h8M17 17.500h8M17 20.500h8M21 6v16" stroke="#217346" stroke-width="1.300"/><path d="M0 3.500L16 1v26L0 24.500z" fill="#217346"/><text x="4" y="18.500" font-size="13" font-weight="bold" fill="#fff">X</text></svg></div>
 <div></div>
 <svg width="157" height="50" viewBox="1605 1030 157 50" fill="none" stroke="#fff" stroke-width="1.500" overflow="visible"><path d="M1612.500 1059l7.500-7.500 7.500 7.500"/><path d="M1646 1050.500h12v10h-14v-4M1659 1053.500v4"/><path d="M1648 1053h5v5.500h-5z" fill="#fff" stroke="none"/><path d="M1641.500 1047v3M1645 1047v3M1640 1050.500h6v3h-6zM1643 1053v4"/><path d="M1670.500 1052.500h3l4-4v14l-4-4h-3z"/><path d="M1680 1053q1.500 2.500 0 5M1683 1050.500q3 5 0 10" stroke-width="1.200"/><path d="M1686 1048q5 7.500 0 15" stroke="#889095" stroke-width="1.200"/><circle cx="1710" cy="1055" r="9.500"/><ellipse cx="1710" cy="1055" rx="4.500" ry="9.500"/><path d="M1701 1051.500h18M1701 1058.500h18"/><circle cx="1715" cy="1060.500" r="4.500" fill="#1b2a30"/><path d="M1712 1057.500l6 6"/><text x="1734" y="1061.500" font-size="15" fill="#fff" stroke="none" textLength="28" lengthAdjust="spacingAndGlyphs">ENG</text></svg>
 <div class="clock"><div><span data-w="51">2:38 PM</span></div><div><span data-w="75">10/26/2020</span></div></div>
 <svg width="100" height="50" viewBox="1820 1030 100 50"><path d="M1869 1045.500h20v15h-11l-4 4v-4h-5z" fill="#fff"/><path d="M1872.500 1049.500h13M1872.500 1053h13M1872.500 1056.500h8" stroke="#1b2a30" stroke-width="1.200"/><circle cx="1888.700" cy="1064.500" r="9.700" fill="#333c40" stroke="#999"/><text x="1885" y="1069.500" font-size="13" font-weight="bold" fill="#fff">8</text><path d="M1914.500 1030v50" stroke="#66737a"/></svg>
</footer>
<div class="tip"><span data-w="39">Zoom</span></div>
<script>
/* Condense or widen each label horizontally to its own set width. */
document.querySelectorAll('[data-w],[data-s]').forEach(function (el) {
  var natural = el.getBoundingClientRect().width;
  var target = el.dataset.w ? parseFloat(el.dataset.w) : natural * parseFloat(el.dataset.s);
  el.style.width = target + 'px';
  el.style.flex = 'none';
  el.style.transform = 'scaleX(' + target / natural + ')';
  if (el.parentElement.classList.contains('clipw')) el.style.overflow = 'visible';
});
</script>
</body>
</html>
